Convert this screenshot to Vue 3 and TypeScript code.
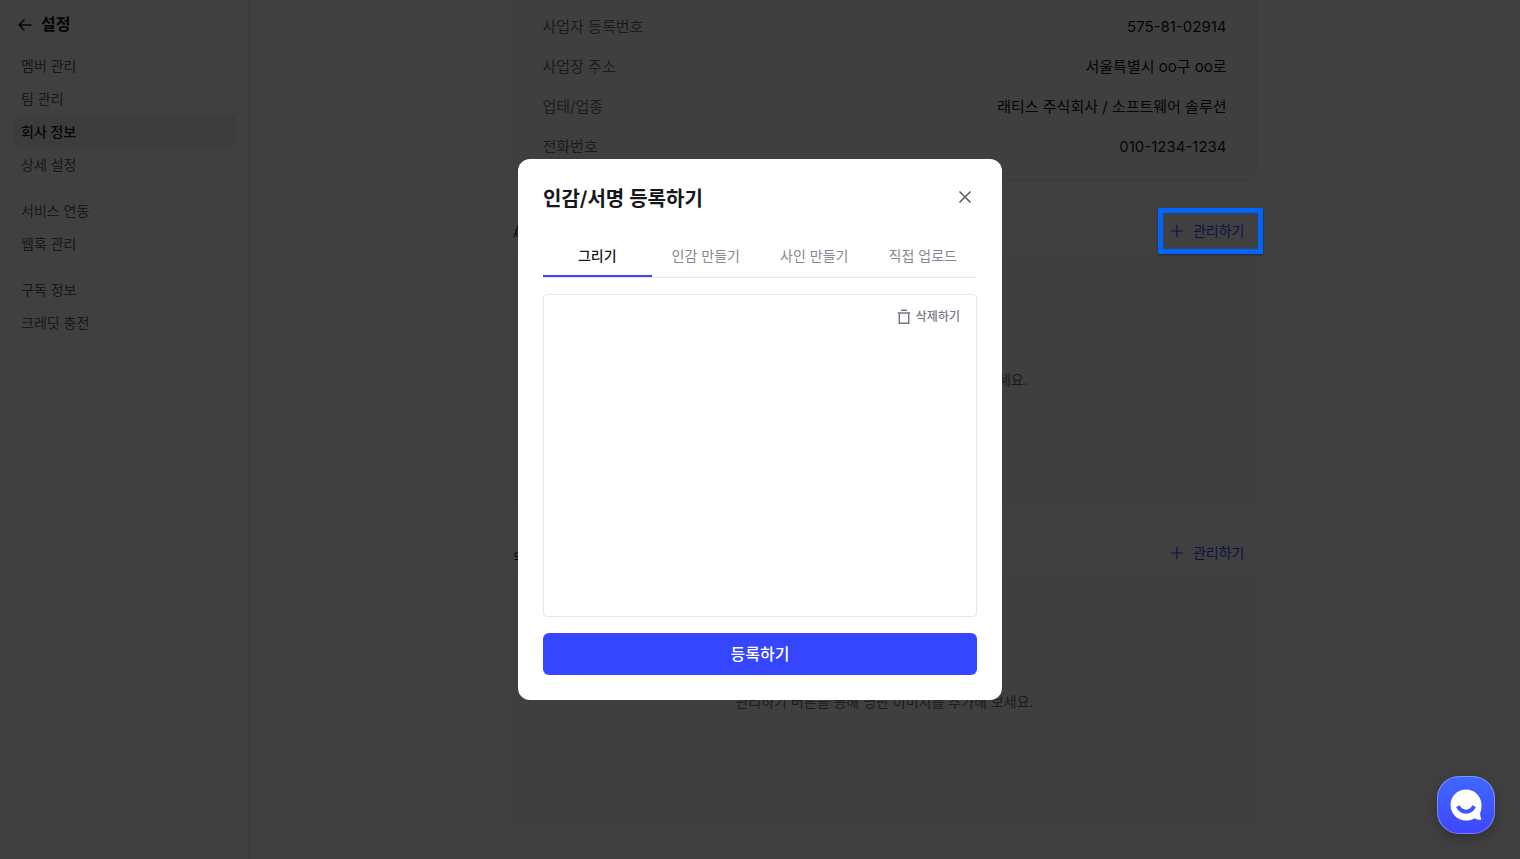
<script setup lang="ts">
import { ref } from 'vue'

const navGroups = [
  ['멤버 관리', '팀 관리', '회사 정보', '상세 설정'],
  ['서비스 연동', '웹훅 관리'],
  ['구독 정보', '크레딧 충전'],
]
const currentPage = '회사 정보'

const companyInfo = [
  { label: '사업자 등록번호', value: '575-81-02914' },
  { label: '사업장 주소', value: '서울특별시 oo구 oo로' },
  { label: '업태/업종', value: '래티스 주식회사 / 소프트웨어 솔루션' },
  { label: '전화번호', value: '010-1234-1234' },
]

const sections = [
  {
    title: '인감/서명',
    icon: 'M.8 14.500 2.500 10 5 2c1.500-1.200 2.800.2 2 2.500L5 10c-1 1.800-3 1-2-1.500L4.500 6M2 11l3.500 3.500M8 12h6',
    hint: '관리하기 버튼을 통해 인감/서명을 추가해 보세요.',
    highlighted: true,
  },
  {
    title: '명판',
    icon: 'M6.500 7.500V2h3v5.500M14 8H2v3.500h12zM1.500 14.500h13',
    hint: '관리하기 버튼을 통해 명판 이미지를 추가해 보세요.',
    highlighted: false,
  },
]

const tabs = ['그리기', '인감 만들기', '사인 만들기', '직접 업로드']
const activeTab = ref(tabs[0])
</script>

<template>
  <div class="page">
    <aside class="sidebar">
      <header class="sidebar-head">
        <button type="button" class="icon-button" aria-label="뒤로">
          <svg width="16" height="16" viewBox="0 0 16 16" fill="none" stroke="currentColor" stroke-width="1.6" stroke-linecap="round" stroke-linejoin="round">
            <path d="M14 8H2.200M7 3 2 8l5 5" />
          </svg>
        </button>
        <h1>설정</h1>
      </header>
      <nav class="nav">
        <ul v-for="(group, i) in navGroups" :key="i">
          <li v-for="item in group" :key="item">
            <a href="#" :class="{ current: item === currentPage }">{{ item }}</a>
          </li>
        </ul>
      </nav>
    </aside>

    <main class="main">
      <div class="column">
        <dl class="info-card">
          <div v-for="row in companyInfo" :key="row.label" class="info-row">
            <dt>{{ row.label }}</dt>
            <dd>{{ row.value }}</dd>
          </div>
        </dl>

        <section v-for="section in sections" :key="section.title" class="section">
          <header class="section-head">
            <h2>
              <svg width="16" height="16" viewBox="0 0 16 16" fill="none" stroke="currentColor" stroke-width="1">
                <path :d="section.icon" />
              </svg>
              <span>{{ section.title }}</span>
            </h2>
            <button type="button" class="manage">
              <svg width="14" height="14" viewBox="0 0 14 14" fill="none" stroke="currentColor" stroke-width="1.2">
                <path d="M7 1v12M1 7h12" />
              </svg>
              <span>관리하기</span>
              <span v-if="section.highlighted" class="highlight" aria-hidden="true"></span>
            </button>
          </header>
          <div class="empty">{{ section.hint }}</div>
        </section>
      </div>
    </main>

    <div class="backdrop">
      <div class="modal" role="dialog" aria-modal="true" aria-labelledby="modal-title">
        <header class="modal-head">
          <h2 id="modal-title">인감/서명 등록하기</h2>
          <button type="button" class="icon-button close" aria-label="닫기">
            <svg width="14" height="14" viewBox="0 0 14 14" fill="none" stroke="currentColor" stroke-width="1.5">
              <path d="M1.5 1.5l11 11M12.5 1.5l-11 11" />
            </svg>
          </button>
        </header>
        <div class="tabs" role="tablist">
          <button
            v-for="tab in tabs"
            :key="tab"
            type="button"
            role="tab"
            :aria-selected="tab === activeTab"
            :class="{ active: tab === activeTab }"
            @click="activeTab = tab"
          >
            {{ tab }}
          </button>
        </div>
        <div class="canvas">
          <button type="button" class="clear">
            <svg width="14" height="16" viewBox="0 0 14 16" fill="none" stroke="currentColor" stroke-width="1.5">
              <path d="M4 1.3h6M.8 3.9h12.400M2.300 3.900v10.300h9.400V3.900" />
            </svg>
            <span>삭제하기</span>
          </button>
        </div>
        <button type="button" class="submit">등록하기</button>
      </div>
    </div>

    <button type="button" class="chat" aria-label="채팅 문의">
      <svg width="32" height="32" viewBox="0 0 32 32">
        <path fill="#fff" d="M16 .5C7.400.5.500 7.300.500 16S7.400 31.500 16 31.500c3.300 0 6.200-.8 8.700-2.300 1.400 1 3.500 1.500 5.500 1.600.9 0 1.300-.7.900-1.400-.7-1.300-1-3.600-.9-5.500.9-2.300 1.300-5 1.300-7.900C31.500 7.300 24.600.5 16 .5z" />
        <path fill="none" stroke="#3f55ff" stroke-width="4" d="M7.900 17.200c1.700 3.600 4.700 5.500 8.100 5.500s6.400-1.900 8.100-5.500" />
      </svg>
    </button>
  </div>
</template>

<style>
body {
  margin: 0;
}
</style>

<style scoped>
.page {
  display: grid;
  grid-template-columns: 249px 1fr;
  height: 100vh;
  overflow: hidden;
  background: #fff;
  color: #16171a;
  font-family: Inter, 'Noto Sans CJK KR', sans-serif;
  font-size: 14px;
  line-height: 20px;
}

.page * {
  box-sizing: border-box;
}

h1,
h2,
ul,
dl,
dd {
  margin: 0;
  padding: 0;
}

button {
  padding: 0;
  border: 0;
  background: none;
  color: inherit;
  font: inherit;
  cursor: pointer;
}

svg {
  display: block;
  flex: none;
}

.icon-button {
  display: flex;
}

.sidebar {
  padding: 12px 12px 12px 13px;
  border-right: 1px solid #e8e8ec;
}

.sidebar-head {
  display: flex;
  align-items: center;
  gap: 8px;
  padding: 0 4px 12px;
}

h1 {
  font-size: 16px;
  line-height: 25px;
  font-weight: 700;
}

.nav {
  display: grid;
  gap: 13px;
}

.nav ul {
  list-style: none;
}

.nav a {
  display: block;
  padding: 0 8px;
  border-radius: 6px;
  color: #5f626b;
  line-height: 33px;
  text-decoration: none;
}

.nav a.current {
  background: #eeeef0;
  color: #16171a;
  font-weight: 500;
}

.column {
  max-width: 744px;
  margin: 0 auto;
}

.info-card {
  display: grid;
  gap: 16px;
  padding: 15px 29px 21px;
  border: 1px solid #eaebee;
  border-top: 0;
  border-radius: 0 0 16px 16px;
  background: #f9f9fa;
  font-size: 15px;
  line-height: 24px;
}

.info-row {
  display: flex;
  justify-content: space-between;
}

.info-row dt {
  color: #6f727c;
}

.section-head {
  display: flex;
  align-items: center;
  justify-content: space-between;
  height: 75px;
  padding: 24px 12px 0 0;
}

.section-head h2 {
  display: flex;
  align-items: center;
  gap: 6px;
  font-size: 16px;
  font-weight: 500;
}

.manage {
  position: relative;
  display: flex;
  align-items: center;
  gap: 9px;
  color: #3646ff;
}

.highlight {
  position: absolute;
  z-index: 20;
  inset: -13px -18px -13px -12px;
  border: 5px solid #0064ff;
  box-shadow: 0 1px 2px rgba(0, 0, 0, 0.4);
}

.empty {
  display: flex;
  align-items: center;
  justify-content: center;
  height: 247px;
  border: 1px solid #f4f4f6;
  border-radius: 6px;
  background: #f9f9fa;
  color: #6f727c;
}

.backdrop {
  position: fixed;
  z-index: 10;
  inset: 0;
  display: flex;
  align-items: center;
  justify-content: center;
  background: rgba(0, 0, 0, 0.75);
}

.modal {
  width: 484px;
  padding: 25px;
  border-radius: 12px;
  background: #fff;
}

.modal-head {
  display: flex;
  align-items: flex-end;
  justify-content: space-between;
  padding-right: 5px;
}

.modal-head h2 {
  font-size: 20px;
  line-height: 30px;
  font-weight: 600;
}

.close {
  padding-bottom: 10px;
  color: #55585f;
}

.tabs {
  display: grid;
  grid-template-columns: repeat(4, 1fr);
  margin-top: 22px;
  border-bottom: 1px solid #e6e7ea;
}

.tabs button {
  height: 41px;
  border-bottom: 2px solid transparent;
  color: #858893;
}

.tabs button.active {
  border-color: #3646ff;
  color: #16171a;
  font-weight: 500;
}

.canvas {
  display: flex;
  align-items: flex-start;
  justify-content: flex-end;
  height: 323px;
  margin: 16px 0;
  padding: 12px 16px;
  border: 1px solid #e6e7ea;
  border-radius: 4px;
}

.clear {
  display: flex;
  align-items: center;
  gap: 5px;
  color: #777a85;
  font-size: 12px;
  font-weight: 500;
}

.submit {
  width: 100%;
  height: 42px;
  border-radius: 6px;
  background: #3646ff;
  color: #fff;
  font-size: 16px;
  font-weight: 500;
}

.chat {
  position: fixed;
  z-index: 30;
  right: 25px;
  bottom: 25px;
  display: grid;
  place-items: center;
  width: 58px;
  height: 58px;
  border: 1px solid rgba(255, 255, 255, 0.3);
  border-radius: 22px;
  background: linear-gradient(#3f68ff, #3f46ff) border-box;
  box-shadow: 0 4px 12px rgba(0, 0, 0, 0.25);
}
</style>
